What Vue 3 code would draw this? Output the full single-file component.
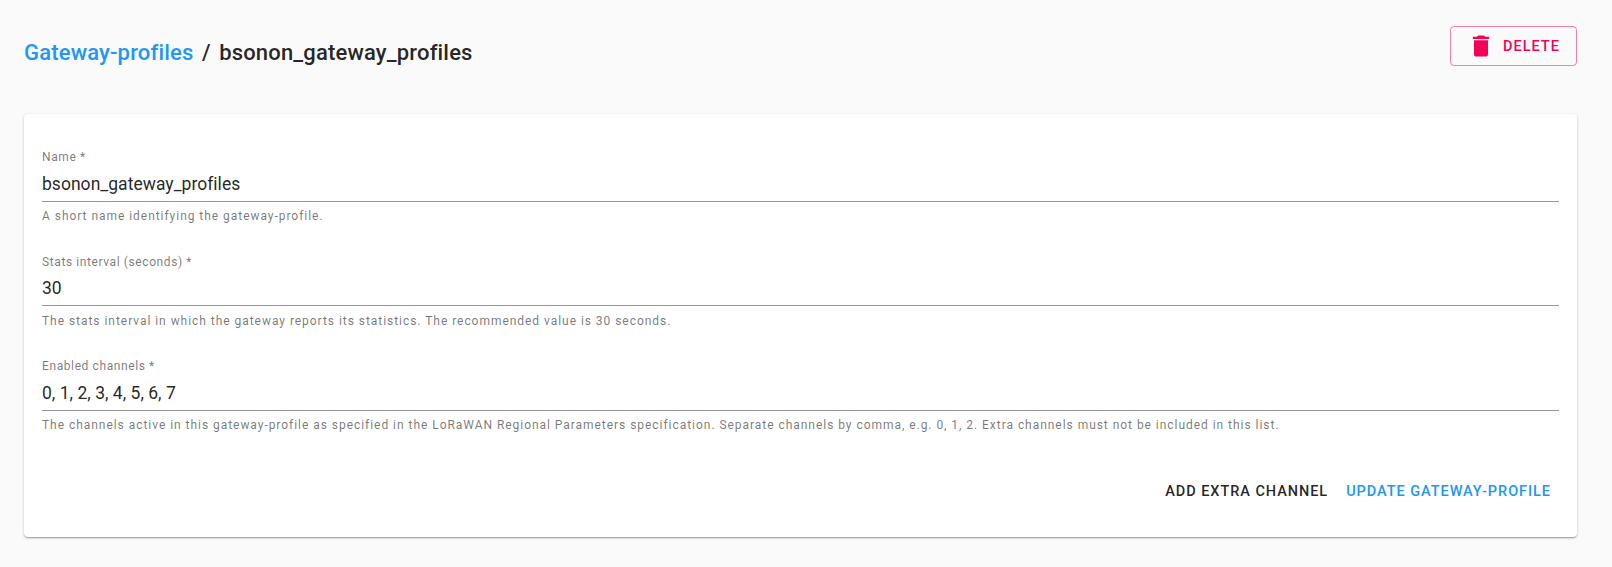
<script setup>
const fields = [
  {
    label: 'Name *',
    value: 'bsonon_gateway_profiles',
    help: 'A short name identifying the gateway-profile.',
  },
  {
    label: 'Stats interval (seconds) *',
    value: '30',
    help: 'The stats interval in which the gateway reports its statistics. The recommended value is 30 seconds.',
  },
  {
    label: 'Enabled channels *',
    value: '0, 1, 2, 3, 4, 5, 6, 7',
    help: 'The channels active in this gateway-profile as specified in the LoRaWAN Regional Parameters specification. Separate channels by comma, e.g. 0, 1, 2. Extra channels must not be included in this list.',
  },
];
</script>

<template>
  <div class="page">
    <header class="title-bar">
      <h1 class="crumbs">
        <a class="crumb-link">Gateway-profiles</a>
        <span class="crumb-sep">/</span>
        <span>bsonon_gateway_profiles</span>
      </h1>
      <button class="delete-btn" type="button">
        <svg class="delete-icon" viewBox="0 0 24 24" aria-hidden="true">
          <path d="M6 19c0 1.1.9 2 2 2h8c1.1 0 2-.9 2-2V7H6v12zM19 4h-3.5l-1-1h-5l-1 1H5v2h14V4z" />
        </svg>
        DELETE
      </button>
    </header>

    <form class="card" @submit.prevent>
      <div v-for="field in fields" :key="field.label" class="field">
        <label class="field-label">{{ field.label }}</label>
        <input class="field-input" type="text" :value="field.value" />
        <p class="field-help">{{ field.help }}</p>
      </div>
      <div class="actions">
        <button class="text-btn" type="button">ADD EXTRA CHANNEL</button>
        <button class="text-btn primary" type="submit">UPDATE GATEWAY-PROFILE</button>
      </div>
    </form>
  </div>
</template>

<style>
html,
body {
  background: #fafafa;
}
</style>

<style scoped>
.page {
  padding: 26px 35px 30px 24px;
  font-family: Roboto, "Liberation Sans", sans-serif;
  color: rgba(0, 0, 0, 0.87);
}

.title-bar {
  display: flex;
  justify-content: space-between;
  align-items: flex-start;
  height: 88px;
}

.crumbs {
  margin: 13px 0 0;
  display: flex;
  gap: 8.5px;
  font-size: 22px;
  font-weight: 500;
  line-height: 28px;
  letter-spacing: 0.17px;
}

.crumb-link {
  color: #2196f3;
}

.delete-btn {
  display: flex;
  align-items: center;
  gap: 8px;
  width: 127px;
  height: 40px;
  padding: 0 0 0 17px;
  background: transparent;
  border: 1px solid rgba(245, 0, 87, 0.5);
  border-radius: 4px;
  color: #f50057;
  font: 500 14.5px Roboto, sans-serif;
  letter-spacing: 1px;
}

.delete-icon {
  width: 28px;
  height: 28px;
  margin-left: -1px;
  fill: currentColor;
}

.card {
  height: 423px;
  box-sizing: border-box;
  padding: 24px 18px 0;
  background: #fff;
  border-radius: 4px;
  box-shadow: 0 1px 3px rgba(0, 0, 0, 0.2), 0 1px 1px rgba(0, 0, 0, 0.14), 0 2px 1px -1px rgba(0, 0, 0, 0.12);
}

.field {
  height: 104.5px;
  padding-top: 12px;
  box-sizing: border-box;
}

.field-label {
  display: block;
  font-size: 12px;
  line-height: 14px;
  letter-spacing: 0.6px;
  color: rgba(0, 0, 0, 0.54);
}

.field-input {
  display: block;
  width: 100%;
  height: 37.5px;
  box-sizing: border-box;
  padding: 9px 0 6px;
  border: 0;
  border-bottom: 1px solid rgba(0, 0, 0, 0.42);
  outline: none;
  background: transparent;
  font: 400 17.5px Roboto, sans-serif;
  letter-spacing: 0.03px;
  color: rgba(0, 0, 0, 0.87);
}

.field-help {
  margin: 7.5px 0 0;
  font-size: 12px;
  line-height: 14px;
  letter-spacing: 0.96px;
  color: rgba(0, 0, 0, 0.54);
}

.actions {
  display: flex;
  justify-content: flex-end;
  gap: 2px;
  margin-top: 22px;
}

.text-btn {
  padding: 6px 8px;
  background: transparent;
  border: 0;
  font: 500 14.5px/24px Roboto, sans-serif;
  letter-spacing: 0.95px;
  color: rgba(0, 0, 0, 0.87);
}

.text-btn.primary {
  color: #2196f3;
}
</style>
